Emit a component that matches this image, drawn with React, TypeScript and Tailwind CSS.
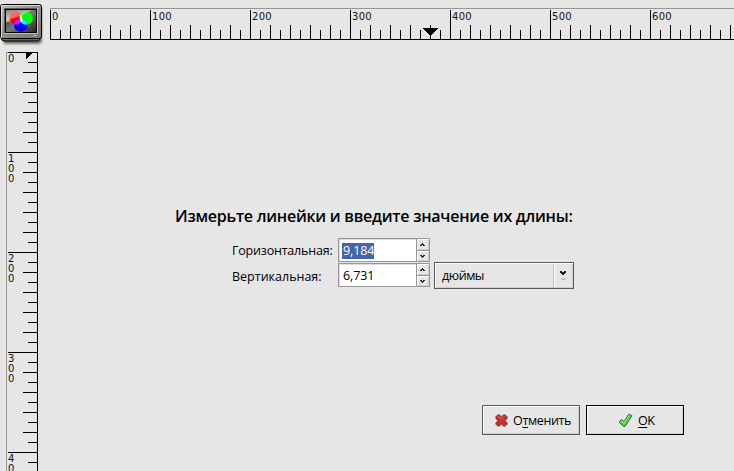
import type { ReactNode } from 'react';

const steps = (n: number) => Array.from({ length: n }, (_, i) => i);

function HorizontalRuler() {
  return (
    <svg width="684" height="32" viewBox="0 0 684 32" shapeRendering="crispEdges" className="block shrink-0 font-['DejaVu_Sans',sans-serif] text-[10px]">
      <rect x="0" y="0" width="684" height="1" fill="#969696" />
      <rect x="0" y="0" width="1" height="3" fill="#969696" />
      <rect x="0" y="31" width="684" height="1" fill="#000" />
      {steps(69).map((i) => {
        const top = i % 10 === 0 ? 2 : i % 2 === 0 ? 17 : 22;
        return <rect key={i} x={i * 10} y={top} width="1" height={31 - top} fill="#000" />;
      })}
      {steps(7).map((i) => (
        <text key={i} x={i * 100 + 2} y="12" fill="#111" letterSpacing="0.3">{i * 100}</text>
      ))}
      <path d="M373 20h15v1h-1v1h-1v1h-1v1h-1v1h-1v1h-1v1h-1v1h-1v-1h-1v-1h-1v-1h-1v-1h-1v-1h-1v-1h-1v-1h-1z" />
    </svg>
  );
}

function VerticalRuler() {
  return (
    <svg width="32" height="419" viewBox="0 0 32 419" shapeRendering="crispEdges" className="block shrink-0 font-['DejaVu_Sans',sans-serif] text-[10px]">
      <rect x="0" y="0" width="1" height="419" fill="#969696" />
      <rect x="0" y="0" width="3" height="1" fill="#969696" />
      <rect x="31" y="0" width="1" height="419" fill="#000" />
      {steps(42).map((i) => {
        const left = i % 10 === 0 ? 2 : i % 2 === 0 ? 17 : 22;
        return <rect key={i} x={left} y={i * 10} width={31 - left} height="1" fill="#000" />;
      })}
      {steps(5).map((i) =>
        String(i * 100).split('').slice(0, i === 4 ? 2 : 3).map((d, j) => (
          <text key={`${i}-${j}`} x="2" y={i * 100 + 10 + j * 10} fill="#111">{d}</text>
        )),
      )}
      <path d="M20 0h7v1h-1v1h-1v1h-1v1h-1v1h-1v1h-1v1h-1z" />
    </svg>
  );
}

function MonitorIcon() {
  return (
    <svg width="44" height="44" viewBox="0 0 44 44" className="block shrink-0">
      <defs>
        <linearGradient id="case" x2="1" y2="1">
          <stop stopColor="#c2beb6" /><stop offset=".5" stopColor="#928d84" /><stop offset="1" stopColor="#77736a" />
        </linearGradient>
        <linearGradient id="glass" x2="1" y2="1">
          <stop stopColor="#222" /><stop offset=".5" stopColor="#777" /><stop offset="1" stopColor="#222" />
        </linearGradient>
        <linearGradient id="gloss" x2="0" y2="1">
          <stop stopColor="#fff" stopOpacity=".05" /><stop offset="1" stopColor="#fff" stopOpacity=".65" />
        </linearGradient>
        <filter id="shade"><feGaussianBlur stdDeviation=".9" /></filter>
      </defs>
      <path d="M2 4h40v34l-3 2H4z" fill="#000" opacity=".5" filter="url(#shade)" />
      <path d="M1 34.500h39.500l-2 2.500H3z" fill="#6b675f" stroke="#000" />
      <rect x=".5" y=".5" width="41" height="34" rx="2" fill="url(#case)" stroke="#000" />
      <path d="M1.500 34V1.500H40" fill="none" stroke="#dcd8d0" />
      <rect x="4" y="4" width="34" height="26" fill="#c5c1b9" />
      <rect x="4" y="4" width="33" height="25" fill="#5c5953" />
      <rect x="5.5" y="5.5" width="31" height="23" fill="url(#glass)" stroke="#000" />
      <path d="M6 6h27C25 9 19 17 6 18z" fill="url(#gloss)" />
      <circle cx="16" cy="14" r="6.3" fill="#f00" />
      <circle cx="26.5" cy="14.3" r="6.5" fill="#0f0" />
      <circle cx="20.8" cy="21" r="6.8" fill="#00f" />
      <path d="M21 10.200A6.300 6.300 0 0 1 22.300 14.500L20.500 17.500A6.500 6.500 0 0 1 21 10.200z" fill="#ff6" />
      <path d="M14 20.300A6.800 6.800 0 0 1 20.300 14.500L21.200 17.500A6.500 6.500 0 0 1 14 20.300z" fill="#f0f" />
      <path d="M21.500 14.500A6.800 6.800 0 0 1 27.300 20.700A6.500 6.500 0 0 1 20.500 17.500z" fill="#0ff" />
      <path d="M20.500 14.300h2l-.5 3.500h-1.500z" fill="#fff" />
      <path d="M6 6h27C25 9 19 14 6 16z" fill="#fff" opacity=".4" />
      <path d="M33.500 32.500l1-1h2" fill="none" stroke="#d5d0c8" />
    </svg>
  );
}

function Spin({ value, selected }: { value: string; selected?: boolean }) {
  return (
    <div className="flex h-6 w-[92px] border border-[#969696] bg-white">
      <div className="flex flex-1 items-center border-t border-l border-[#dcdcdc] pl-[2px] text-[12.5px] font-medium tracking-[-0.1px]">
        <span className={selected ? 'flex h-4 w-8 items-center bg-[#4464ac] pt-px pl-px text-white' : 'flex h-4 w-8 items-center pt-px pl-px'}>
          {value}
        </span>
      </div>
      <svg width="13" height="22" viewBox="0 0 13 22" shapeRendering="crispEdges" className="block">
        <rect width="13" height="22" fill="#e6e6e6" />
        <path d="M0 0h1v22H0zM1 11h12v1H1z" fill="#969696" />
        <path d="M1 0h12v1H1zM1 1h1v10H1zM1 12h12v1H1zM1 13h1v9H1z" fill="#fff" />
        <path d="M12 1h1v10h-1zM2 10h11v1H2zM12 13h1v9h-1zM2 21h11v1H2z" fill="#cdcdcd" />
        <path d="M6 4h1v1h1v1h1v1H7V6H6v1H4V6h1V5h1zM4 16h2v1h1v-1h2v1H8v1H7v1H6v-1H5v-1H4z" fill="#222" />
      </svg>
    </div>
  );
}

function CrossIcon() {
  return (
    <svg width="13" height="13" viewBox="0 0 14 14" className="block">
      <path d="M1 3L3 1h2l2 2.500L9 1h2l2 2v2l-2.500 2L13 9.500v1.500l-2 2H9L7 10.500 5 13H3l-2-2V9.500L3.500 7 1 5z" fill="#d22c2c" stroke="#6e3434" strokeWidth="1" />
      <path d="M2.500 3.500l1-1L7 5.500l3-3" fill="none" stroke="#ee6b65" />
    </svg>
  );
}

function CheckIcon() {
  return (
    <svg width="15" height="15" viewBox="0 0 15 15" className="block">
      <path d="M1 9l2.500-2.500L6 8.500 11 1l1.500 1L14 2.500 7 13.500H5.500z" fill="#3fd03f" stroke="#426b42" />
      <path d="M2.500 9l1-1L6 10.500 11.500 2.500" fill="none" stroke="#a8f2a3" />
    </svg>
  );
}

function Button({ icon, children, primary }: { icon: ReactNode; children: ReactNode; primary?: boolean }) {
  return (
    <button className={`flex h-[30px] w-[98px] items-center border bg-[#e6e6e6] text-[12.5px] whitespace-nowrap shadow-[inset_1px_1px_#fff,inset_-1px_-1px_#cdcdcd] ${primary ? 'gap-[5px] border-black pl-[31px] tracking-[-0.6px]' : 'gap-[5px] border-[#5a5a5a] pl-3 tracking-[-0.35px]'}`}>
      {icon}
      <span className="pt-px leading-4">{children}</span>
    </button>
  );
}

export default function App() {
  return (
    <div className="flex h-[471px] w-[734px] flex-col overflow-hidden bg-[#e6e6e6] font-['Open_Sans','Noto_Sans',sans-serif] text-[12.5px] font-medium text-black">
      <header className="flex h-[52px] shrink-0">
        <div className="w-[50px] shrink-0 pt-1"><MonitorIcon /></div>
        <div className="pt-2"><HorizontalRuler /></div>
      </header>
      <main className="flex flex-1 pl-[6px]">
        <VerticalRuler />
        <section className="flex flex-1 flex-col">
          <h1 className="mt-[152px] ml-[137px] h-6 w-[410px] text-[16px] leading-6 font-semibold tracking-[-0.25px] whitespace-nowrap">
            Измерьте линейки и введите значение их длины:
          </h1>
          <div className="mt-[10px] ml-[194px] flex">
            <div className="flex w-[106px] flex-col whitespace-nowrap">
              <span className="h-[26px] leading-[25px] tracking-[-0.2px]">Горизонтальная:</span>
              <span className="h-[26px] leading-[25px]">Вертикальная:</span>
            </div>
            <div className="flex flex-col gap-px"><Spin value="9,184" selected /><Spin value="6,731" /></div>
            <div className="mt-6 ml-1 flex h-[27px] w-[140px] items-center border border-[#5a5a5a] pl-[7px] shadow-[inset_1px_1px_#fff,inset_-1px_-1px_#cdcdcd]">
              <span className="flex-1 pt-[2px] tracking-[-0.45px]">дюймы</span>
              <svg width="20" height="25" viewBox="0 0 20 25" shapeRendering="crispEdges">
                <path d="M0 1h1v23H0z" fill="#bcbcbc" /><path d="M1 1h1v23H1z" fill="#fff" />
                <path d="M7 8h2v1h2v-1h2v2h-1v1h-1v1h-2v-1H8v-1H7z" fill="#222" />
                <path d="M8 15h5v2H8z" fill="#c4c4c4" />
              </svg>
            </div>
          </div>
          <footer className="mt-auto mb-9 ml-[444px] flex gap-[6px]">
            <Button icon={<CrossIcon />}>О<span className="underline underline-offset-2">т</span>менить</Button>
            <Button icon={<CheckIcon />} primary><span className="underline underline-offset-2">O</span>K</Button>
          </footer>
        </section>
      </main>
    </div>
  );
}
